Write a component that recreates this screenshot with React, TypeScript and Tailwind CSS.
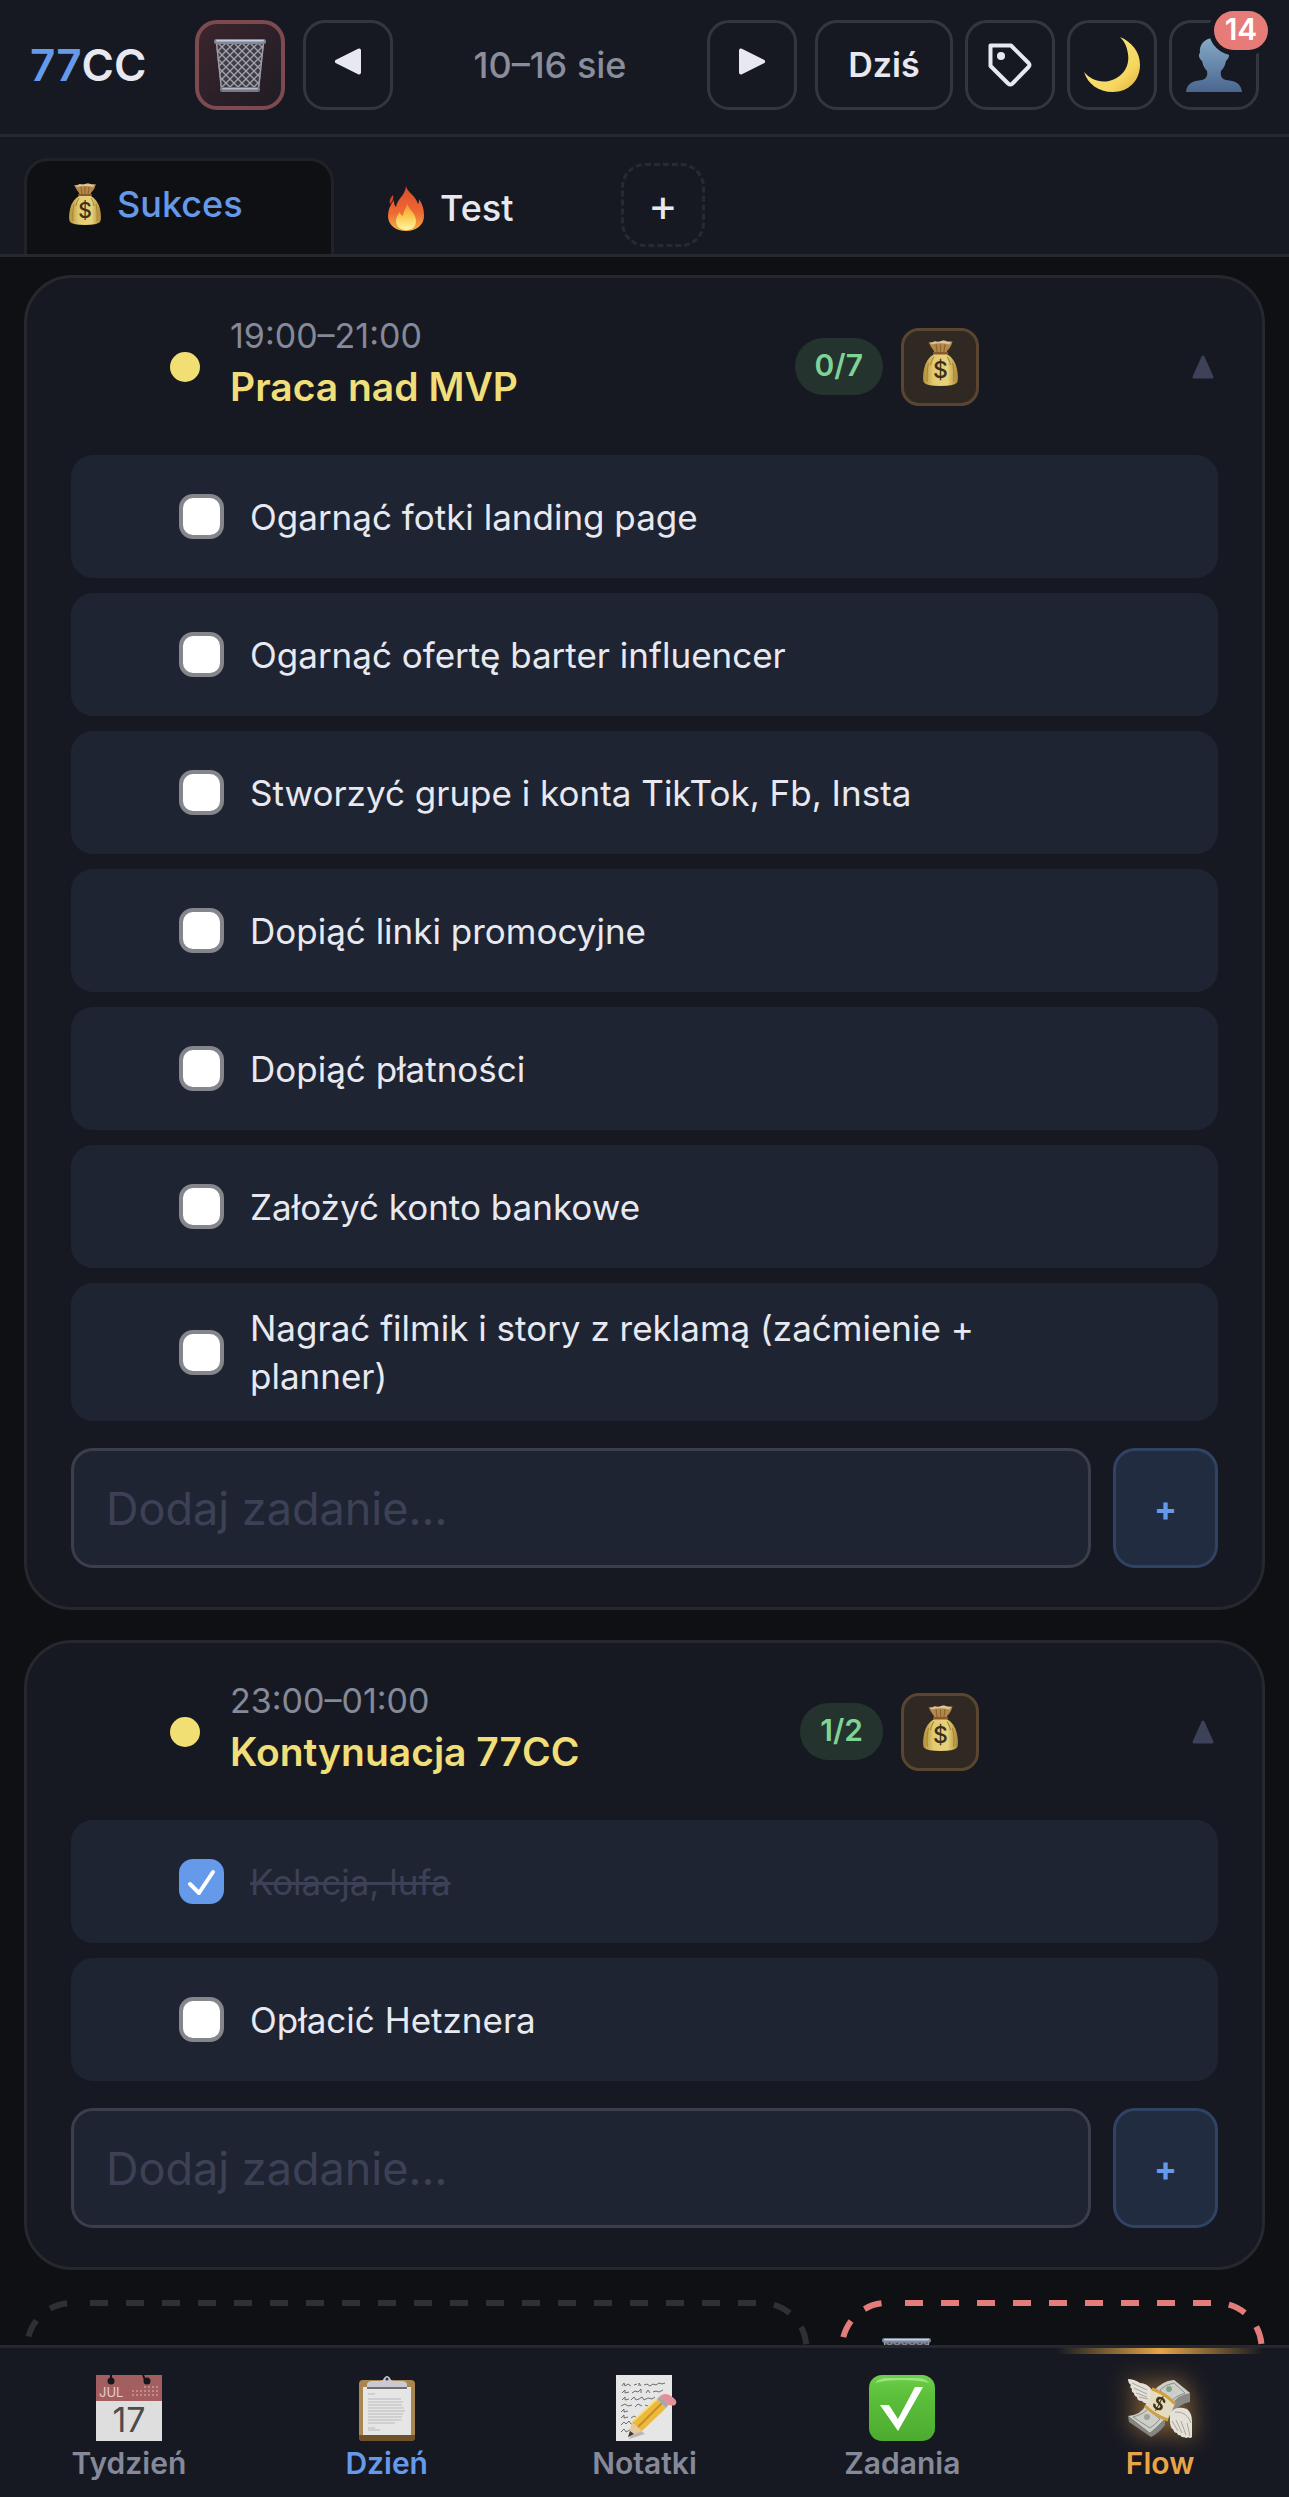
import type { ReactNode } from "react";

type Task = { id: string; text: string; done?: boolean };

type Block = {
  id: string;
  time: string;
  title: string;
  count: string;
  tasks: Task[];
};

const BLOCKS: Block[] = [
  {
    id: "mvp",
    time: "19:00–21:00",
    title: "Praca nad MVP",
    count: "0/7",
    tasks: [
      { id: "mvp-1", text: "Ogarnąć fotki landing page" },
      { id: "mvp-2", text: "Ogarnąć ofertę barter influencer" },
      { id: "mvp-3", text: "Stworzyć grupe i konta TikTok, Fb, Insta" },
      { id: "mvp-4", text: "Dopiąć linki promocyjne" },
      { id: "mvp-5", text: "Dopiąć płatności" },
      { id: "mvp-6", text: "Założyć konto bankowe" },
      { id: "mvp-7", text: "Nagrać filmik i story z reklamą (zaćmienie + planner)" },
    ],
  },
  {
    id: "77cc",
    time: "23:00–01:00",
    title: "Kontynuacja 77CC",
    count: "1/2",
    tasks: [
      { id: "77cc-1", text: "Kolacja, lufa", done: true },
      { id: "77cc-2", text: "Opłacić Hetznera" },
    ],
  },
];

export default function App() {
  return (
    <div className="flex h-screen flex-col overflow-hidden bg-[#0f1014] font-['Inter','Liberation_Sans',sans-serif] text-[#e8e9f0]">
      <IconDefs />
      <TopBar />
      <TabBar />
      <main className="min-h-0 flex-1 overflow-y-auto px-6 pt-[18px] [scrollbar-width:none]">
        <div className="flex flex-col gap-[30px]">
          {BLOCKS.map((block) => (
            <BlockCard key={block.id} block={block} />
          ))}
          <div className="grid grid-cols-[786fr_426fr] gap-[30px]">
            <DropZone className="text-[#2e3036]" />
            <DropZone className="text-[#e27d7b]">
              <TrashIcon className="h-[50px] w-[49px]" />
            </DropZone>
          </div>
        </div>
      </main>
      <BottomNav />
    </div>
  );
}

function TopBar() {
  return (
    <header className="flex items-center border-b-[3px] border-[#26282f] bg-[#171922] pt-5 pr-[30px] pb-6 pl-[30px]">
      <h1 className="w-[165px] shrink-0 text-[44px] leading-[48px] font-semibold">
        <span className="text-[#659aeb]">77</span>CC
      </h1>
      <button
        type="button"
        aria-label="Kosz"
        className="flex size-[90px] shrink-0 items-center justify-center rounded-[22px] border-4 border-[#7c4a50] bg-linear-to-br from-[#3b252c] to-[#1f1c25]"
      >
        <TrashIcon className="h-[53px] w-[52px]" />
      </button>
      <HeaderButton label="Poprzedni tydzień" className="ml-[18px] w-[90px]">
        <svg viewBox="0 0 28 34" className="h-[34px] w-7" aria-hidden>
          <path
            d="M25 2.500v22L3 13.500z"
            fill="#e8e9f0"
            stroke="#e8e9f0"
            strokeWidth="4"
            strokeLinejoin="round"
          />
        </svg>
      </HeaderButton>
      <span className="flex-1 text-center text-[36px] leading-[48px] font-medium text-[#8a8d9c]">
        10–16 sie
      </span>
      <HeaderButton label="Następny tydzień" className="w-[90px]">
        <svg viewBox="0 0 28 34" className="h-[34px] w-7" aria-hidden>
          <path
            d="M3 2.500v22l22-11z"
            fill="#e8e9f0"
            stroke="#e8e9f0"
            strokeWidth="4"
            strokeLinejoin="round"
          />
        </svg>
      </HeaderButton>
      <div className="ml-[18px] flex gap-3">
        <HeaderButton className="w-[138px] text-[34px] leading-[48px] font-semibold">
          Dziś
        </HeaderButton>
        <HeaderButton label="Etykiety" className="w-[90px]">
          <svg viewBox="0 0 44 44" className="size-11" fill="none" aria-hidden>
            <path
              d="M2.500 2.500H23L40.500 20q2 2 0 4L24.500 40.500q-2.200 2-4.400 0L2.500 23z"
              stroke="#e8e9f0"
              strokeWidth="4"
              strokeLinejoin="round"
            />
            <circle cx="13" cy="13" r="4" fill="#e8e9f0" />
          </svg>
        </HeaderButton>
        <HeaderButton label="Motyw" className="w-[90px]">
          <svg viewBox="0 0 56 56" className="size-14" aria-hidden>
            <path
              d="M36 0C48 5 56 15 56 28 56 43 45 55 29 55 14 55 4 47 0 35 6 42 15 46 25 44 38 41 46 30 44 17 43 10 41 5 36 0z"
              fill="url(#moon)"
            />
          </svg>
        </HeaderButton>
        <HeaderButton label="Profil" className="relative w-[90px]">
          <svg viewBox="0 0 56 54" className="h-[54px] w-14" aria-hidden>
            <path
              d="M28 0C18 0 13 7 14 15c-2 1-1 6 2 8 1 5 3 8 5 10 1 5-1 8-5 9C7 43 1 45 0 54h56c-1-9-7-11-16-12-4-1-6-4-5-9 2-2 4-5 5-10 3-2 4-7 2-8C43 7 38 0 28 0z"
              fill="url(#person)"
            />
          </svg>
          <span className="absolute -top-3 -right-3 flex h-[39px] w-[54px] justify-center rounded-full bg-[#e67b78] text-[30px] leading-[36px] font-semibold text-white ring-5 ring-[#171922]">
            14
          </span>
        </HeaderButton>
      </div>
    </header>
  );
}

function HeaderButton({
  label,
  className,
  children,
}: {
  label?: string;
  className: string;
  children: ReactNode;
}) {
  return (
    <button
      type="button"
      aria-label={label}
      className={`flex h-[90px] shrink-0 items-center justify-center rounded-[22px] border-[3px] border-[#34363f] ${className}`}
    >
      {children}
    </button>
  );
}

function TabBar() {
  return (
    <nav className="flex items-end gap-3 border-b-[3px] border-[#26282f] bg-[#171922] px-6 pt-[21px]">
      <button
        type="button"
        className="flex h-24 w-[310px] items-center gap-4 rounded-t-3xl border-[3px] border-b-0 border-[#202228] bg-[#0f1014] pb-2 pl-[42px] text-[36px] leading-[48px] font-medium text-[#659aeb]"
      >
        <MoneyBagIcon className="h-[42px] w-8" />
        Sukces
      </button>
      <button
        type="button"
        className="flex h-24 w-[263px] items-center gap-4 pt-1 pl-[42px] text-[36px] leading-[48px] font-medium"
      >
        <svg viewBox="0 0 36 45" className="h-[45px] w-9" aria-hidden>
          <path
            d="M18 0c1 6 10 10 12 18 1-1 1-3 1-5 4 6 5 11 5 17 0 9-8 15-18 15S0 39 0 30c0-6 2-11 6-16 0 3 0 5 2 7 1-8 9-11 10-21z"
            fill="url(#flame)"
          />
          <path d="M5 9c-3 3-4 6-3 9 2-2 4-5 3-9z" fill="#d9432a" />
          <path
            d="M19 17c1 6 9 10 9 18 0 6-4 9-10 9S8 40 8 35c0-4 2-6 4-9 0 2 1 3 3 4 0-5 4-8 4-13z"
            fill="url(#flameCore)"
          />
        </svg>
        Test
      </button>
      <button
        type="button"
        aria-label="Dodaj zakładkę"
        className="mb-[7px] flex size-[84px] items-center justify-center rounded-3xl border-[3px] border-dashed border-[#282a32] text-[45px] leading-[48px]"
      >
        +
      </button>
    </nav>
  );
}

function BlockCard({ block }: { block: Block }) {
  return (
    <section className="rounded-[48px] border-[3px] border-[#26282e] bg-[#171922] px-11 pb-[39px]">
      <div className="flex h-[177px] items-center pr-1 pl-[99px]">
        <span className="size-[30px] rounded-full bg-[#f2df74]" />
        <div className="ml-[30px] flex-1 pb-2">
          <div className="text-[34px] leading-[48px] text-[#858999]">
            {block.time}
          </div>
          <h2 className="text-[39px] leading-[54px] font-semibold text-[#f0de78]">
            {block.title}
          </h2>
        </div>
        <span className="rounded-full bg-[#25332f] px-5 pt-1.5 pb-[9px] text-[30px] leading-[42px] font-semibold text-[#7fd396]">
          {block.count}
        </span>
        <button
          type="button"
          aria-label="Sukces"
          className="mr-[213px] ml-[18px] flex size-[78px] justify-center rounded-[18px] border-[3px] border-[#5a4530] bg-[#302822] pt-[9px]"
        >
          <MoneyBagIcon className="h-[46px] w-[35px]" />
        </button>
        <button type="button" aria-label="Zwiń">
          <svg viewBox="0 0 22 24" className="h-6 w-[22px]" aria-hidden>
            <path
              d="M11 2l9 20H2z"
              fill="#3d4258"
              stroke="#3d4258"
              strokeWidth="3"
              strokeLinejoin="round"
            />
          </svg>
        </button>
      </div>

      <ul className="flex flex-col gap-[15px]">
        {block.tasks.map((task) => (
          <TaskRow key={task.id} task={task} />
        ))}
      </ul>

      <form className="mt-[27px] flex gap-[22px]">
        <input
          type="text"
          aria-label="Dodaj zadanie"
          placeholder="Dodaj zadanie…"
          className="h-[120px] min-w-0 flex-1 rounded-[22px] border-[3px] border-[#3c3f4b] bg-[#1f2433] px-8 text-[45px] placeholder:text-[#3d4155]"
        />
        <button
          type="button"
          aria-label="Dodaj"
          className="h-[120px] w-[105px] rounded-[22px] border-[3px] border-[#314364] bg-[#222c40] text-[34px] font-bold text-[#659aeb]"
        >
          +
        </button>
      </form>
    </section>
  );
}

function TaskRow({ task }: { task: Task }) {
  return (
    <li className="flex min-h-[123px] items-center gap-[26px] rounded-[22px] bg-[#1f2433] py-[21px] pr-[140px] pl-[108px]">
      <span className="relative size-[45px] shrink-0">
        <input
          id={task.id}
          type="checkbox"
          defaultChecked={task.done}
          className="peer block size-[45px] appearance-none rounded-[14px] border-4 border-[#85868c] bg-white checked:border-[#659aeb] checked:bg-[#659aeb]"
        />
        <svg
          viewBox="0 0 45 45"
          className="pointer-events-none absolute inset-0 hidden peer-checked:block"
          fill="none"
          aria-hidden
        >
          <path
            d="M11 25l9 9 14-21"
            stroke="#fff"
            strokeWidth="4"
            strokeLinecap="round"
            strokeLinejoin="round"
          />
        </svg>
      </span>
      <label
        htmlFor={task.id}
        className={
          task.done
            ? "text-[35px] leading-[48px] text-[#3d4155] line-through"
            : "text-[35px] leading-[48px]"
        }
      >
        {task.text}
      </label>
    </li>
  );
}

function DropZone({
  className,
  children,
}: {
  className: string;
  children?: ReactNode;
}) {
  return (
    <div className={`relative h-[150px] pt-[38px] pl-[43px] ${className}`}>
      <svg className="absolute inset-0 size-full" fill="none" aria-hidden>
        <rect
          x="3"
          y="3"
          rx="45"
          className="h-[calc(100%-6px)] w-[calc(100%-6px)]"
          stroke="currentColor"
          strokeWidth="6"
          strokeDasharray="18 18"
          strokeDashoffset="18"
        />
      </svg>
      {children}
    </div>
  );
}

function BottomNav() {
  return (
    <nav className="grid h-[152px] shrink-0 grid-cols-5 border-t-[3px] border-[#26282f] bg-[#171922] text-[30px] leading-9 font-semibold text-[#858999]">
      <NavItem label="Tydzień">
        <svg viewBox="0 0 66 66" className="size-[66px]" aria-hidden>
          <rect width="66" height="66" fill="#dedede" />
          <rect width="66" height="26" fill="#a35f60" />
          <path d="M15 0v5M47 0l2 5" stroke="#15161b" strokeWidth="2" />
          <circle cx="15" cy="6" r="3.500" fill="#15161b" />
          <circle cx="51" cy="6" r="3.500" fill="#15161b" />
          <path
            d="M36 16h27M36 20h27"
            stroke="#c08b8b"
            strokeWidth="2"
            strokeDasharray="2 2"
          />
          <path d="M48 12h15" stroke="#c08b8b" strokeWidth="2" strokeDasharray="2 2" />
          <text
            x="3"
            y="22"
            fontSize="13"
            fontWeight="400"
            fill="#e6cfcf"
            fontFamily="Inter"
          >
            JUL
          </text>
          <text
            x="33"
            y="57"
            fontSize="34"
            fontWeight="400"
            fill="#4c4c4c"
            textAnchor="middle"
            fontFamily="Inter"
          >
            17
          </text>
        </svg>
      </NavItem>
      <NavItem label="Dzień" className="text-[#659aeb]">
        <svg viewBox="0 0 66 66" className="size-[66px]" aria-hidden>
          <rect x="5" y="5" width="56" height="61" rx="4" fill="#a98650" />
          <path d="M5 60h56v2a4 4 0 0 1-4 4H9a4 4 0 0 1-4-4z" fill="#6f522a" />
          <rect x="9" y="12" width="48" height="48" fill="#e6e6e6" />
          <path
            d="M14 19h7M14 24h33M14 27h35M14 30h34M14 33h36M14 36h37M14 39h35M14 42h34M14 45h33M14 48h27M14 53h7M14 55h12"
            stroke="#b9b9bb"
            strokeWidth="1"
          />
          <path
            d="M13 14V9q1-3 5-3h8q3 0 4-3 3-4 6 0 1 3 4 3h8q4 0 5 3v5z"
            fill="#c9c9d4"
          />
          <path d="M13 12h40v2H13z" fill="#756d70" />
          <circle cx="33" cy="4" r="1.500" fill="#33343c" />
        </svg>
      </NavItem>
      <NavItem label="Notatki">
        <svg viewBox="0 0 66 66" className="size-[66px]" aria-hidden>
          <rect x="5" width="56" height="66" fill="#e6e6e6" />
          <g stroke="#6d6e72" strokeWidth="1" fill="none">
            <path d="M11 11l2-3 1 3 3-2 3 2M23 10l3-1M28 11v-3l2 3M33 10l3-1 3 2 3-2 3 1 3-2 3 1 3-1" />
            <path d="M11 18l3-3v3l4-1M21 18l3-2 3 1 3-3v4M35 18l2-3 2 3M42 17l3-1 3 1 4-2" />
            <path d="M11 25l3-3v3l4-1M20 25l3-3 2 3 3-1 3-2 2 3 4-2 4 1 3-2" />
            <path d="M10 31l4-2 3 2 4-1M24 32l3-3 4 2M34 30l3 1M39 30l4-1" />
            <path d="M10 37l3-3v3l4-1" />
            <path d="M10 43l3-3v3l4-1M20 43l3-2 3 2M29 42l3-1" />
            <path d="M10 50l3-3 2 2 3-3 2 3 4-1" />
            <path d="M10 57l3-3 2 3 4-2" />
          </g>
          <path d="M18 64l5-14 11 9z" fill="#00000033" />
          <path d="M17 62l4-15 10 9z" fill="#e8c79a" />
          <path d="M17 62l2-6 4 3z" fill="#3a3838" />
          <path d="M21 47l25-23 9 9-24 23z" fill="#edb93d" />
          <path d="M27 52l24-24" stroke="#c98f22" strokeWidth="2" />
          <path d="M22 46l24-22" stroke="#fbdc7e" strokeWidth="2" />
          <path d="M46 24l3-3 9 8-3 4z" fill="#a5a8ad" />
          <path d="M49 21q5-4 11 0 8 5 4 9-2 1-6 0z" fill="#e58f98" />
        </svg>
      </NavItem>
      <NavItem label="Zadania">
        <svg viewBox="0 0 66 66" className="size-[66px]" aria-hidden>
          <rect width="66" height="66" rx="13" fill="url(#checkGreen)" />
          <path d="M6 8q4-5 12-5h30q8 0 12 5-10-3-27-3T6 8z" fill="#9be480" />
          <path d="M11 30h9l9 14 17-32h8L29 56z" fill="#fff" />
        </svg>
      </NavItem>
      <NavItem label="Flow" className="text-[#e8a548]" active>
        <svg
          viewBox="0 0 66 66"
          className="size-[66px] drop-shadow-[0_0_12px_#e8a54899]"
          aria-hidden
        >
          <path d="M27 16q8-10 20-11l16 13v9q-10 1-19 13z" fill="#8a8b88" />
          <path d="M27 16q8-10 20-11l16 13q-11 1-19 12z" fill="#cdcec8" />
          <path d="M1 41q13-1 18-11l19 14q-8 8-15 14z" fill="#cdcec8" />
          <path d="M1 41l22 17q7-6 15-14v6q-6 8-14 12L2 47z" fill="#858684" />
          <path
            d="M6 42q11-3 15-8l12 10q-5 6-10 9zM33 15q6-6 14-7l11 10q-9 3-14 8z"
            stroke="#8d908a"
            strokeWidth="1"
            fill="none"
          />
          <circle cx="20" cy="42" r="3" fill="#9fa19a" />
          <circle cx="42" cy="14" r="3" fill="#7fa58a" />
          <path d="M25 14q13 4 23 15l-7 15Q29 41 18 31z" fill="#e4dcc0" />
          <path
            d="M25 14q13 4 23 15M18 31q11 10 23 14"
            stroke="#d0a040"
            strokeWidth="3"
            fill="none"
          />
          <text
            x="32"
            y="35"
            fontSize="18"
            fontWeight="700"
            fill="#443518"
            textAnchor="middle"
            fontFamily="Inter"
            transform="rotate(28 32 29)"
          >
            $
          </text>
          <path
            d="M25 15Q20 8 13 8 7 4 1 4q0 4 3 6-2 2 1 4-1 3 2 4 0 3 3 4 0 4 5 4 2 3 6 2z"
            fill="#e4e1d8"
          />
          <path
            d="M5 8l15 7M7 13l13 6M9 18l11 4M12 22l9 2"
            stroke="#a9a69e"
            strokeWidth="1"
          />
          <path
            d="M43 38q6-8 17-4 5 4 5 12v16q-2 2-4 0-1 2-4 0-2 1-4-2-2 1-3-2-3 0-4-4-2 0-3-6z"
            fill="#e4e1d8"
          />
          <path
            d="M48 37q12-1 16 11M60 48l3 13M54 46l5 14M49 45l6 13M45 46l6 10"
            stroke="#a9a69e"
            strokeWidth="1"
            fill="none"
          />
        </svg>
      </NavItem>
    </nav>
  );
}

function NavItem({
  label,
  className = "",
  active,
  children,
}: {
  label: string;
  className?: string;
  active?: boolean;
  children: ReactNode;
}) {
  return (
    <a
      href="#"
      className={`relative flex flex-col items-center gap-1 pt-[27px] ${className}`}
    >
      {active && (
        <span className="absolute inset-x-[10%] top-0 h-1.5 bg-linear-to-r from-transparent via-[#e8a548] to-transparent" />
      )}
      {children}
      {label}
    </a>
  );
}

function MoneyBagIcon({ className }: { className: string }) {
  return (
    <svg viewBox="0 0 32 42" className={className} aria-hidden>
      <path
        d="M5 2q3 1 5-1 3 1 6 0 3-1 6 0 3 1 5 0-1 5-5 9l-1 3H11l-1-3Q7 6 5 2z"
        fill="#b5884a"
      />
      <path d="M6 2q3 1 5-1 3 1 5 0 3-1 5 0 3 1 5 0l-2 3q-8-2-16 0z" fill="#d9c5a0" />
      <path d="M12 4l1 8M16 4v8M20 4l-1 8" stroke="#8a6330" strokeWidth="1" />
      <path
        d="M10 13h12q7 4 9 13 2 10 0 13-3 3-15 3T1 39q-2-3 0-13 2-9 9-13z"
        fill="url(#bag)"
      />
      <path
        d="M5 21q-2 9-1 17M27 21q2 9 1 17M10 15q-3 5-3 8M22 15q3 5 3 8"
        stroke="#a8842f"
        strokeWidth="1"
        fill="none"
      />
      <path d="M10 12h12" stroke="#8a5a2c" strokeWidth="2" strokeLinecap="round" />
      <text
        x="16"
        y="35"
        fontSize="21"
        fontWeight="500"
        fill="#3a301b"
        textAnchor="middle"
        fontFamily="Inter"
      >
        $
      </text>
    </svg>
  );
}

function TrashIcon({ className }: { className: string }) {
  return (
    <svg viewBox="0 0 52 53" className={className} aria-hidden>
      <path d="M2 4h48l-5 47H7z" fill="#403d47" />
      <path d="M2 4h48l-5 47H7z" fill="url(#mesh)" />
      <path d="M2.500 4l5 46M49.500 4l-5 46" stroke="#9a9ca6" strokeWidth="1.500" />
      <rect y="0" width="52" height="5" rx="2.500" fill="#7e8a9c" />
      <rect x="2" y="1" width="48" height="1.500" rx="1" fill="#c3cddb" />
      <rect x="6" y="48" width="40" height="5" rx="2.500" fill="#747985" />
      <rect x="8" y="49" width="36" height="1.500" rx="1" fill="#b4bac6" />
    </svg>
  );
}

/** Shared gradients and patterns used by the icons. */
function IconDefs() {
  return (
    <svg className="absolute size-0" aria-hidden>
      <defs>
        <pattern id="mesh" width="8" height="8" patternUnits="userSpaceOnUse">
          <path d="M0 0l8 8M8 0L0 8" stroke="#a2a3ac" strokeWidth="1.300" />
        </pattern>
        <linearGradient id="bag">
          <stop offset="0" stopColor="#b08f3a" />
          <stop offset="0.300" stopColor="#e3cb72" />
          <stop offset="0.700" stopColor="#e8d27c" />
          <stop offset="1" stopColor="#a98836" />
        </linearGradient>
        <linearGradient id="flame" x1="0" y1="0" x2="0" y2="1">
          <stop offset="0" stopColor="#dd4a2c" />
          <stop offset="0.600" stopColor="#ee6a33" />
          <stop offset="1" stopColor="#f6b13e" />
        </linearGradient>
        <linearGradient id="flameCore" x1="0" y1="0" x2="0" y2="1">
          <stop offset="0" stopColor="#f58a3c" />
          <stop offset="0.500" stopColor="#fbc84e" />
          <stop offset="1" stopColor="#fff6a8" />
        </linearGradient>
        <linearGradient id="moon" x1="0" y1="0" x2="1" y2="1">
          <stop offset="0" stopColor="#fbe98c" />
          <stop offset="0.700" stopColor="#f6d860" />
          <stop offset="1" stopColor="#dcae3c" />
        </linearGradient>
        <linearGradient id="person" x1="0" y1="0" x2="0" y2="1">
          <stop offset="0" stopColor="#86aac6" />
          <stop offset="1" stopColor="#4a6690" />
        </linearGradient>
        <linearGradient id="checkGreen" x1="0" y1="0" x2="0" y2="1">
          <stop offset="0" stopColor="#6fd04a" />
          <stop offset="0.300" stopColor="#5cc03a" />
          <stop offset="1" stopColor="#4cab30" />
        </linearGradient>
      </defs>
    </svg>
  );
}
